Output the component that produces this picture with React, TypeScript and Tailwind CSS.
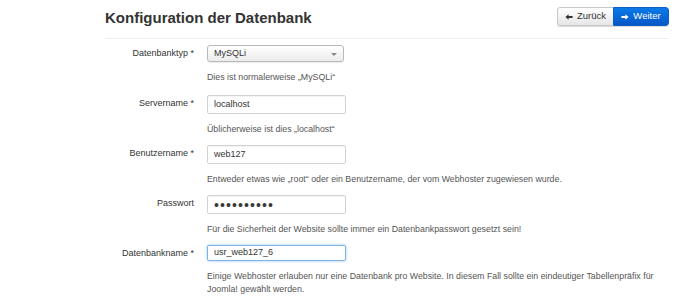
import React from "react"

const font = { fontFamily: '"Liberation Sans", Arial, sans-serif' }

function ArrowLeft({ className }: { className?: string }) {
  return (
    <svg viewBox="0 0 10 10" className={className} fill="currentColor">
      <path d="M0.5 5 L4.5 1.5 L4.5 3.8 L9.5 3.8 L9.5 6.2 L4.5 6.2 L4.5 8.5 Z" />
    </svg>
  )
}

function ArrowRight({ className }: { className?: string }) {
  return (
    <svg viewBox="0 0 10 10" className={className} fill="currentColor">
      <path d="M9.5 5 L5.5 1.5 L5.5 3.8 L0.5 3.8 L0.5 6.2 L5.5 6.2 L5.5 8.5 Z" />
    </svg>
  )
}

type Field = {
  label: string
  value: string
  help: React.ReactNode
  kind?: "select" | "password" | "focus"
}

const fields: Field[] = [
  { label: "Datenbanktyp *", value: "MySQLi", help: "Dies ist normalerweise „MySQLi“", kind: "select" },
  { label: "Servername *", value: "localhost", help: "Üblicherweise ist dies „localhost“" },
  { label: "Benutzername *", value: "web127", help: "Entweder etwas wie „root“ oder ein Benutzername, der vom Webhoster zugewiesen wurde." },
  { label: "Passwort", value: "••••••••••", help: "Für die Sicherheit der Website sollte immer ein Datenbankpasswort gesetzt sein!", kind: "password" },
  {
    label: "Datenbankname *",
    value: "usr_web127_6",
    help: "Einige Webhoster erlauben nur eine Datenbank pro Website. In diesem Fall sollte ein eindeutiger Tabellenpräfix für Joomla! gewählt werden.",
    kind: "focus",
  },
]

function Control({ f }: { f: Field }) {
  if (f.kind === "select") {
    return (
      <div className="flex h-[17px] w-[137px] items-center justify-between rounded-[3px] border border-[#b9b9b9] bg-gradient-to-b from-white to-[#ececec] pl-[6px] pr-[6px] text-[9px] text-[#333] shadow-[0_1px_1px_rgba(0,0,0,0.08)]">
        <span>{f.value}</span>
        <span className="mt-[1px] h-0 w-0 border-x-[3px] border-t-[3px] border-x-transparent border-t-[#888]" />
      </div>
    )
  }
  const focus = f.kind === "focus"
  return (
    <div
      className={
        "flex h-[19px] w-[139px] items-center rounded-[2px] border bg-white pl-[6px] text-[9px] text-[#333] " +
        (focus
          ? "border-[#82b3e6] shadow-[0_0_3px_rgba(82,168,236,0.6)]"
          : "border-[#d2d2d2] shadow-[inset_0_1px_1px_rgba(0,0,0,0.05)]")
      }
    >
      {f.kind === "password" ? (
        <span className="text-[14px] leading-none tracking-[1.1px] text-[#3a3a3a]">{f.value}</span>
      ) : (
        <span>{f.value}</span>
      )}
    </div>
  )
}

export default function App() {
  return (
    <div className="h-[300px] w-[700px] overflow-hidden bg-white" style={font}>
      <div className="ml-[105px] w-[564px]">
        <div className="flex items-start justify-between pt-[7px]">
          <h1 className="pt-[2px] text-[15px] font-bold leading-[18px] text-[#333]">Konfiguration der Datenbank</h1>
          <div className="flex h-[19px] overflow-hidden rounded-[3px] text-[9.5px] shadow-[0_1px_1px_rgba(0,0,0,0.15)]">
            <button className="flex w-[56px] items-center justify-center gap-[4px] rounded-l-[3px] border border-r-0 border-[#c8c8c8] bg-gradient-to-b from-white to-[#e6e6e6] text-[#333]">
              <ArrowLeft className="h-[8px] w-[8px]" />
              Zurück
            </button>
            <button className="flex w-[56px] items-center justify-center gap-[4px] rounded-r-[3px] border border-[#0b5fc2] bg-gradient-to-b from-[#0a7ae8] to-[#0857c6] text-white">
              <ArrowRight className="h-[8px] w-[8px]" />
              Weiter
            </button>
          </div>
        </div>
        <div className="mt-[11px] border-t border-[#eeeeee]" />
        <div className="mt-[6px] flex flex-col">
          {fields.map((f) => (
            <div key={f.label} className="flex h-[50px]">
              <div className="flex h-[18px] w-[90px] items-center justify-end pr-[1px] text-[9px] text-[#333]">{f.label}</div>
              <div className="ml-[12px] flex flex-col">
                <Control f={f} />
                <p className="mt-[9px] w-[452px] text-[8.8px] leading-[13px] text-[#555]">{f.help}</p>
              </div>
            </div>
          ))}
        </div>
      </div>
    </div>
  )
}
